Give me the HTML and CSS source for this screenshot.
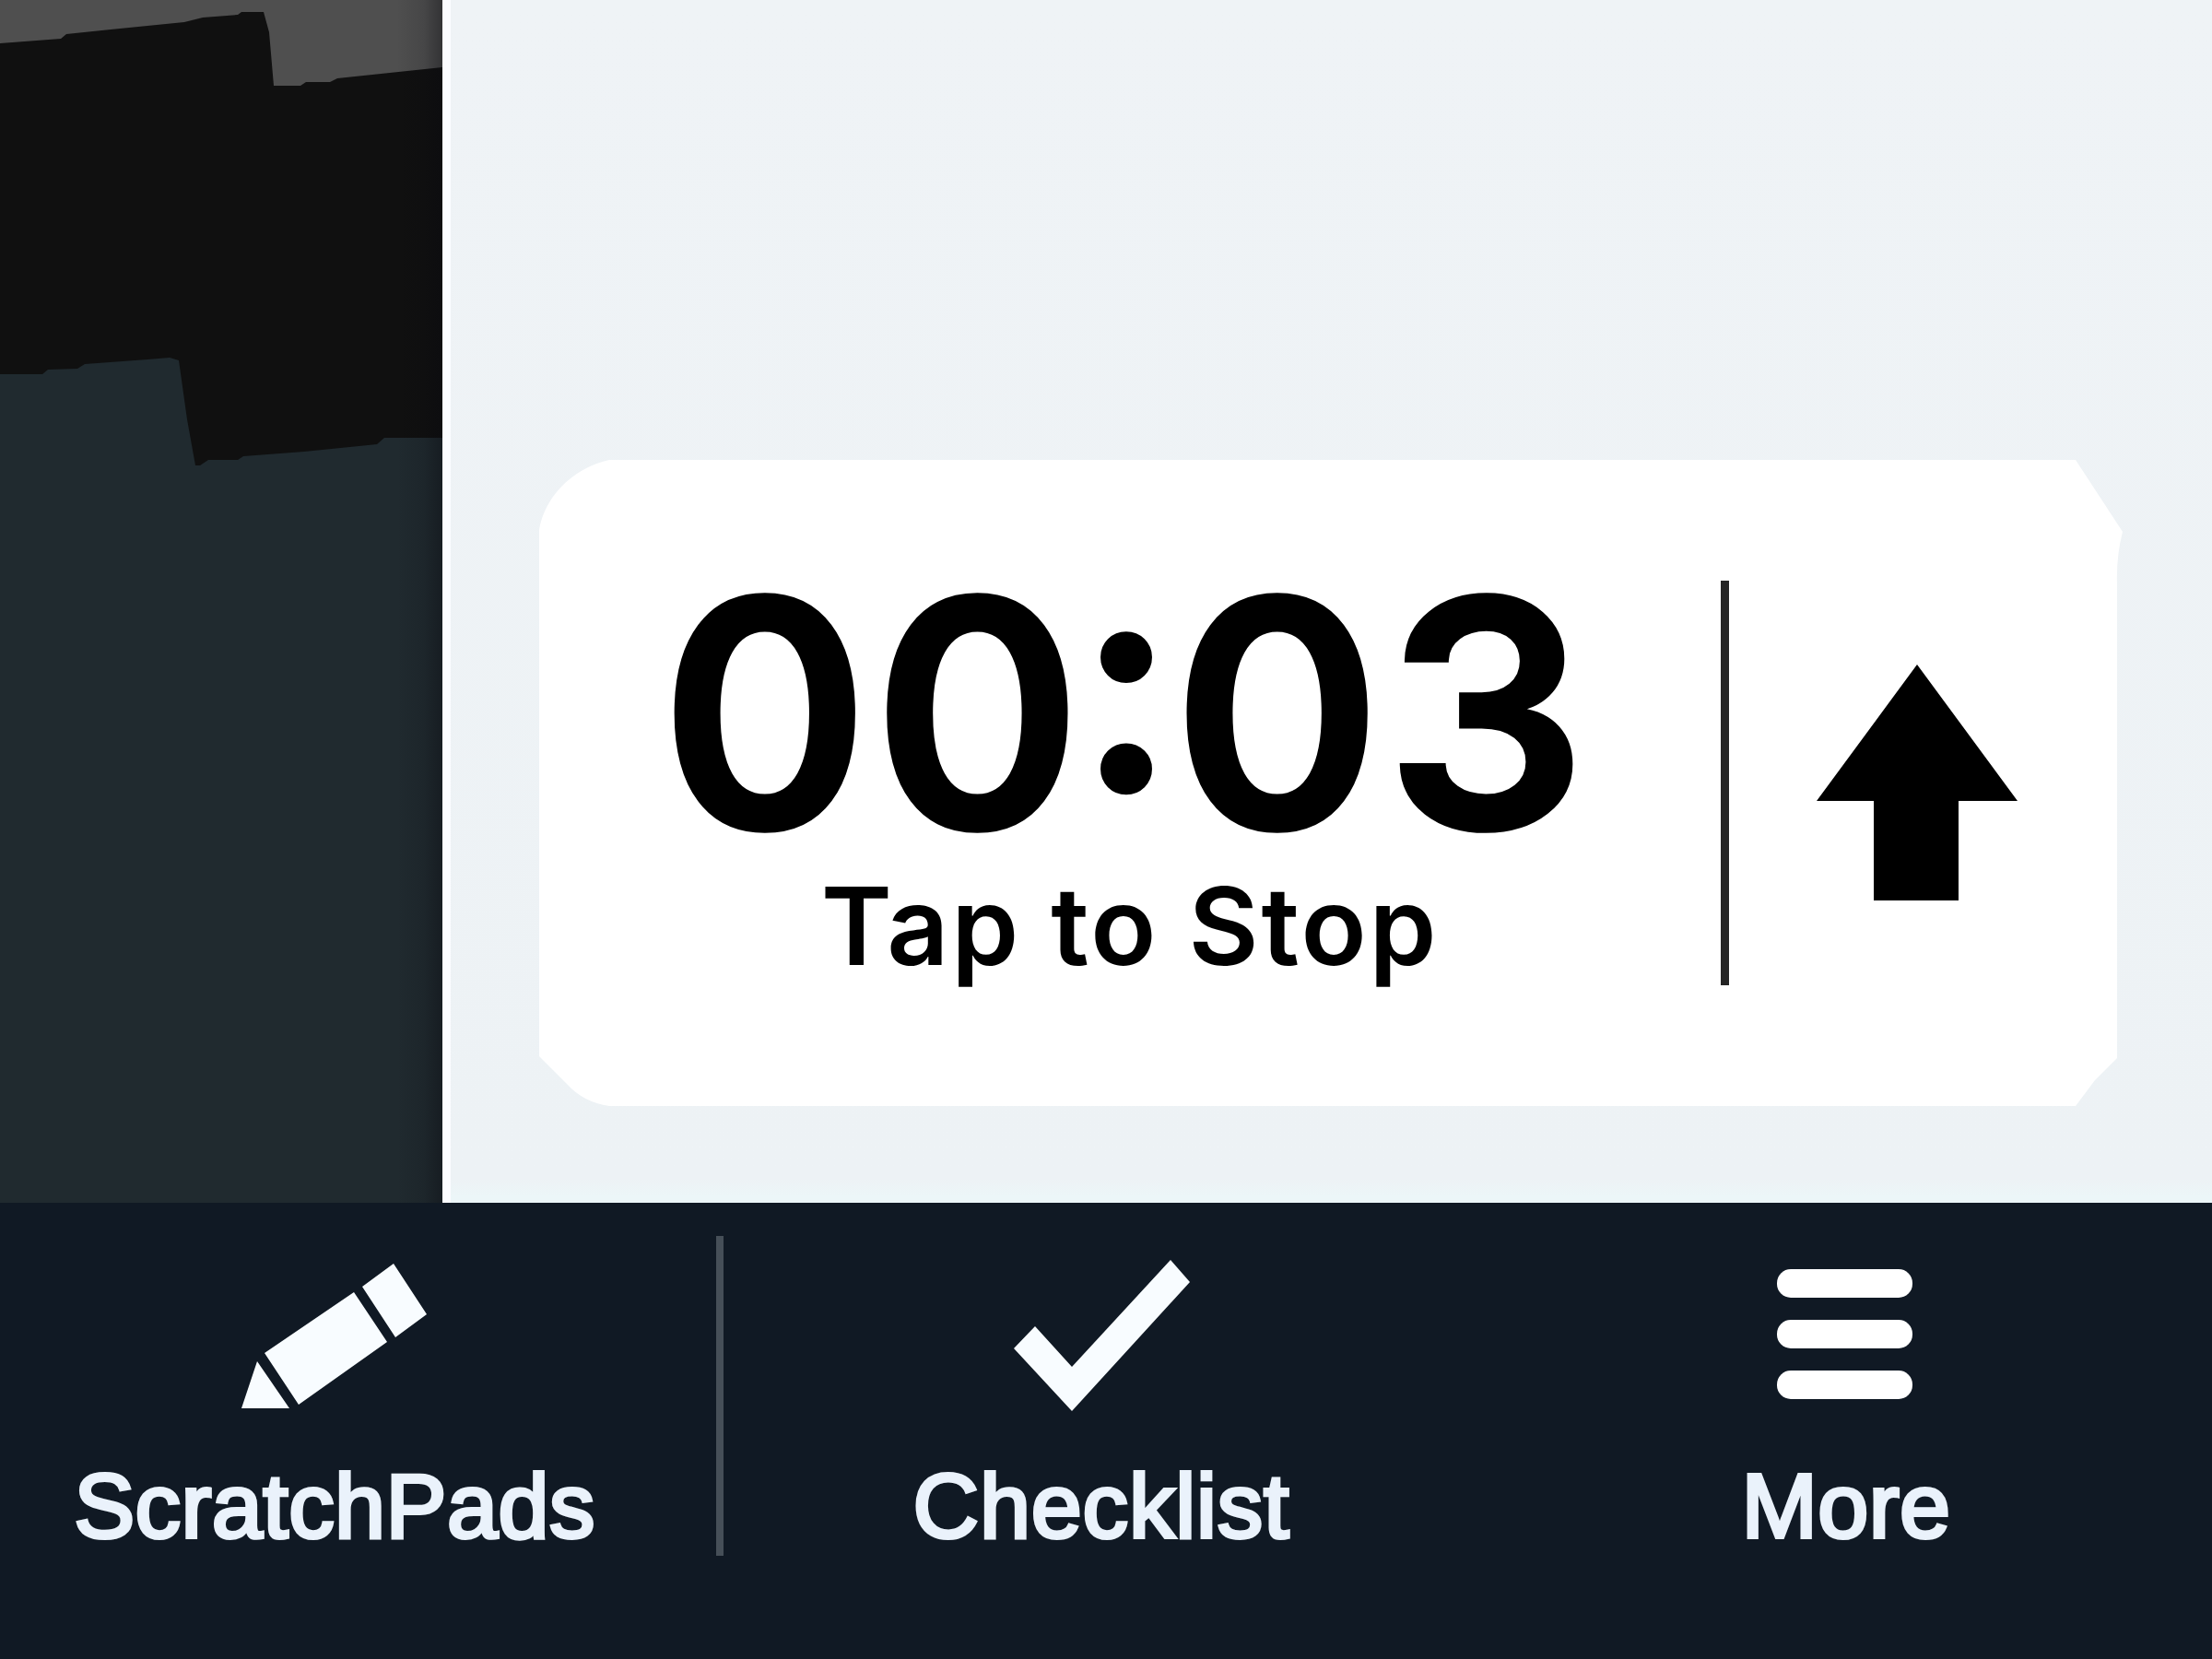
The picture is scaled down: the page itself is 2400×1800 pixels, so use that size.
FILE: index.html
```
<!DOCTYPE html>
<html lang="en">

<head>
    <meta charset="UTF-8">
    <meta name="viewport" content="width=device-width, initial-scale=1.0">
    <title>Flight Timer</title>
    <link rel="stylesheet" href="styles.css">
</head>

<body>

    <main class="content">
        <div class="map">
            <svg class="map-shapes" viewBox="0 0 480 1305">
                <path fill="#4f4f4f" d="M0 0H480V110H0Z" />
                <path fill="#101010" d="M0 47L66 42L72 37L120 32L200 24L220 19L258 16L262 13H286L292 35L297 93H326L332 89H358L366 85L480 73V475H417L409 482L330 490L264 495L258 499H226L217 505H212L203 455L194 391L184 388L160 390L92 395L84 400L52 401L46 406H0Z" />
            </svg>
        </div>

        <div class="panel">
            <div class="timer">
                <svg class="timer-bg" viewBox="0 0 1719 701">
                    <path fill="#fff" d="M76 0H1667L1718 78Q1711 105 1712 135V649L1688 673L1667 701H76Q48 697 30 677L0 647V76C6 40 36 9 76 0Z" />
                </svg>
                <button class="timer-toggle">
                    <span class="time">00<span class="colon">:</span>03</span>
                    <span class="hint">Tap to Stop</span>
                </button>
                <div class="timer-divider"></div>
                <button class="timer-expand">
                    <svg width="220" height="262" viewBox="0 0 220 262">
                        <path d="M109 2L218 150H154V258H62V150H0Z" />
                    </svg>
                </button>
            </div>
        </div>
    </main>

    <nav class="tabbar">
        <a class="tab">
            <svg width="204" height="167" viewBox="261 1366 204 167">
                <path d="M427 1371L463 1426L429 1451L393 1396ZM384 1402L420 1456L324 1524L287 1468ZM279 1477L314 1528H262Z" />
            </svg>
            <span class="label label-scratch">ScratchPads</span>
        </a>
        <div class="tab-divider"></div>
        <a class="tab">
            <svg width="194" height="167" viewBox="1098 1366 194 167">
                <path d="M1270 1367L1291 1391L1163 1531L1100 1463L1123 1439L1163 1483Z" />
            </svg>
            <span class="label label-check">Checklist</span>
        </a>
        <a class="tab tab-more">
            <svg width="150" height="167" viewBox="0 0 150 167">
                <rect x="1" y="11" width="147" height="31" rx="15" />
                <rect x="1" y="66" width="147" height="31" rx="15" />
                <rect x="1" y="121" width="147" height="31" rx="15" />
            </svg>
            <span class="label label-more">More</span>
        </a>
    </nav>

</body>

</html>
```
FILE: styles.css
```
body {
    margin: 0;
    width: 2400px;
    height: 1800px;
    display: flex;
    flex-direction: column;
    overflow: hidden;
    font-family: 'Inter', sans-serif;
    background-color: #101924;
}

button {
    border: none;
    background: none;
    padding: 0;
    color: #000;
    font-family: inherit;
}

.content {
    display: flex;
    height: 1305px;
}

.map {
    position: relative;
    width: 480px;
    background-color: #202a2f;
}

.map-shapes {
    display: block;
    width: 480px;
    height: 1305px;
}

/* shadow cast by the panel */
.map::after {
    content: "";
    position: absolute;
    top: 0;
    right: 0;
    width: 50px;
    height: 100%;
    background: linear-gradient(to right, rgba(8, 8, 14, 0), rgba(8, 8, 14, 0.12) 60%, rgba(8, 8, 14, 0.4));
}

.panel {
    flex: 1;
    box-sizing: border-box;
    padding: 499px 0 0 96px;
    border-left: 9px solid #fbfcff;
    background: linear-gradient(to bottom, #eff3f6, #edf2f5 98%, #ecf6f8 99.5%);
}

.timer {
    position: relative;
    display: flex;
    align-items: center;
    width: 1719px;
    height: 701px;
}

.timer-bg {
    position: absolute;
    inset: 0;
    width: 1719px;
    height: 701px;
}

.timer-toggle {
    position: relative;
    display: flex;
    flex-direction: column;
    align-items: center;
    width: 1282px;
    height: 441px;
    white-space: nowrap;
}

.time {
    height: 318px;
    padding-right: 9px;
    line-height: 290px;
    font-size: 342px;
    font-weight: 600;
    letter-spacing: 5px;
    -webkit-text-stroke: 5px #000;
}

/* lifted to the middle of the digits */
.colon {
    margin: 0 -6px 0 -8px;
    font-size: 325px;
    line-height: 0;
    vertical-align: 41px;
}

.hint {
    line-height: 116px;
    font-size: 117px;
    font-weight: 600;
    letter-spacing: 2.8px;
}

.timer-divider {
    position: relative;
    width: 9px;
    height: 439px;
    background-color: #242424;
}

.timer-expand {
    position: relative;
    width: 408px;
    padding-left: 2px;
}

.timer-expand svg {
    display: block;
    margin: 0 auto;
}

.tabbar {
    display: grid;
    grid-template-columns: 726px 110px 718px 1fr;
    height: 495px;
}

.tab {
    display: flex;
    flex-direction: column;
    align-items: center;
    padding-top: 61px;
}

.tab svg {
    fill: #f8fcff;
}

.tab-more {
    padding-left: 50px;
}

.tab-more svg {
    fill: #fff;
}

.tab-divider {
    width: 8px;
    height: 347px;
    margin: 36px 0 0 51px;
    background-color: #464f58;
}

.label {
    margin-top: 43px;
    line-height: 116px;
    font-family: 'Liberation Sans', Arial, sans-serif;
    font-size: 99px;
    letter-spacing: 0.4px;
    color: #eaf2fb;
    -webkit-text-stroke: 4px #eaf2fb;
    white-space: nowrap;
}

.label-check {
    letter-spacing: 0.8px;
}

.label-more {
    padding-left: 2px;
}
```
